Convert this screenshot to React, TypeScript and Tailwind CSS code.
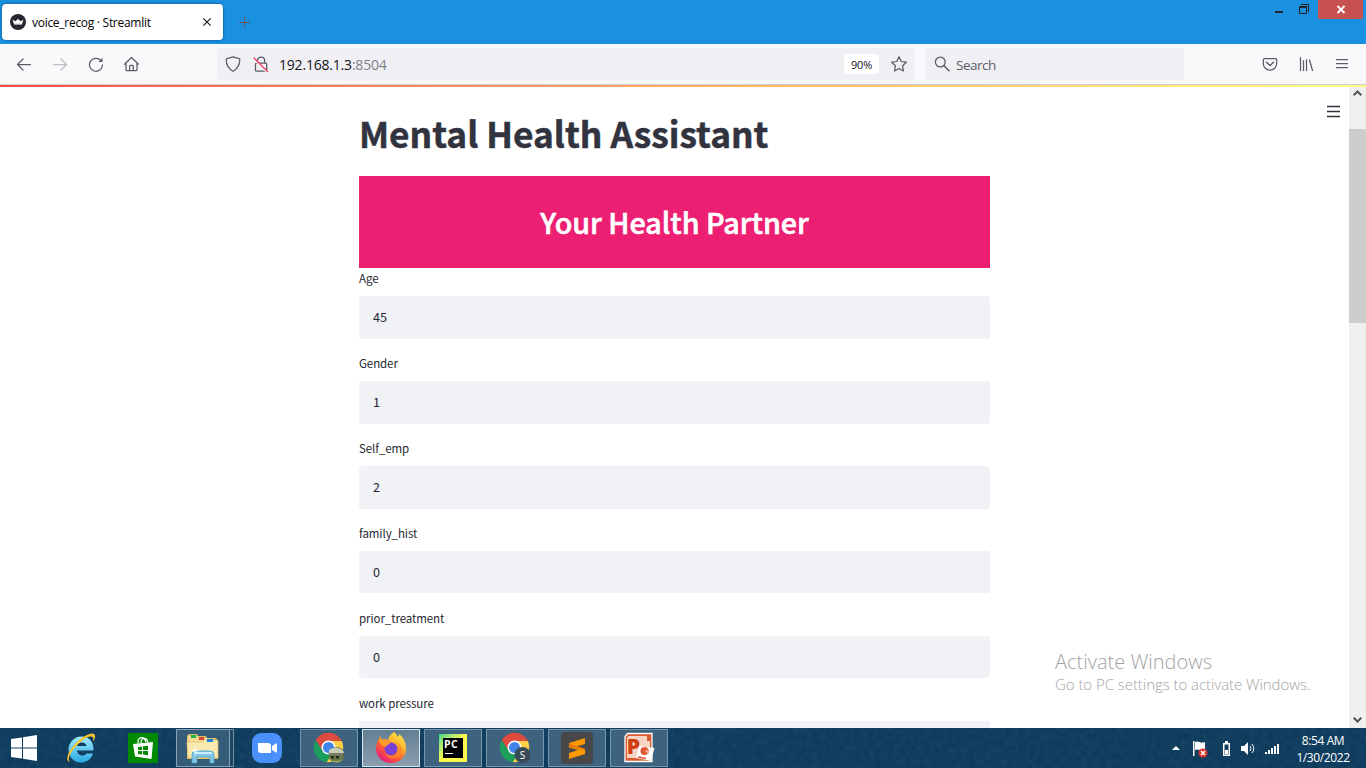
import React from "react";

const fields = [
  { label: "Age", value: "45" },
  { label: "Gender", value: "1" },
  { label: "Self_emp", value: "2" },
  { label: "family_hist", value: "0" },
  { label: "prior_treatment", value: "0" },
  { label: "work pressure", value: "" },
];

function TabBar() {
  return (
    <div className="flex h-11 shrink-0 items-start bg-[#1a91e0]">
      <div className="ml-0.5 mt-1 flex h-9 w-[221px] items-center rounded bg-white pl-2 pr-[10px] shadow-[0_0_3px_rgba(0,0,0,0.45)]">
        <svg width="16" height="16" viewBox="0 0 16 16">
          <circle cx="8" cy="8" r="8" fill="#262730" />
          <path d="M2.6 5.8 5.6 7.3 8 4.7l2.4 2.6 3-1.5-1.5 4.8H4.1z" fill="#fff" />
          <path d="M4.5 10.2h7" stroke="#aaa" />
        </svg>
        <span className="ml-[6px] whitespace-nowrap pt-0.5 text-xs tracking-[-0.28px] text-black">voice_recog · Streamlit</span>
        <svg className="ml-auto" width="12" height="12" viewBox="0 0 12 12">
          <path d="m2.3 2.3 7.4 7.4m0-7.4L2.3 9.700" stroke="#15141a" strokeWidth="1.1" />
        </svg>
      </div>
      <svg className="ml-4 mt-[17px]" width="12" height="12" viewBox="0 0 12 12">
        <path d="M5.500 0v11M0 5.500h11" stroke="#5f5a62" strokeWidth="1" />
      </svg>
      <div className="ml-auto flex items-start">
        <div className="mr-4 mt-[11px] h-0.5 w-2 bg-[#262626]" />
        <svg className="mr-2 mt-1" width="11" height="11" viewBox="0 0 11 11" fill="none" stroke="#222" shapeRendering="crispEdges">
          <path d="M0 2.500h8M.5 2v8M0 9.500h8M7.500 2v8M0 3.500h8" />
          <path d="M2 .5h8M9.500 0v8" />
        </svg>
        <div className="mr-[3px] flex h-[19px] w-[45px] items-center justify-center bg-[#c75050]">
          <svg width="10" height="9" viewBox="0 0 10 9">
            <path d="m1.500 1 7 7m0-7-7 7" stroke="#fff" strokeWidth="1.900" />
          </svg>
        </div>
      </div>
    </div>
  );
}

const line = { fill: "none", stroke: "#5b5b66", strokeWidth: 1.25, strokeLinecap: "round", strokeLinejoin: "round" } as const;

function Toolbar() {
  return (
    <div className="flex h-[41px] shrink-0 items-start border-b border-[#ccccd2] bg-[#f9f9fb]">
      <div className="flex h-full w-[217px] items-center gap-5 pl-4">
        <svg width="16" height="16" viewBox="0 0 16 16" {...line}><path d="M1.500 8.500h13M7 3 1.500 8.500 7 14" /></svg>
        <svg width="16" height="16" viewBox="0 0 16 16" {...line} stroke="#bebec4"><path d="M1.500 8.500h13M9 3 14.500 8.500 9 14" /></svg>
        <svg width="16" height="16" viewBox="0 0 16 16" {...line}>
          <path d="M14.500 9A6.500 6.500 0 1 1 12.700 4.300" /><path d="M14.500 1.800v4.200h-4.200z" fill="#5b5b66" stroke="none" />
        </svg>
        <svg className="-ml-[1px]" width="16" height="16" viewBox="0 0 16 16" {...line}>
          <path d="M1.500 8.200 8.500 1.500l7 6.700M3 7v6.700q0 1 1 1h9q1 0 1-1V7M6.700 14.500v-4.300q0-.8.8-.8h2q.8 0 .8.800v4.300" />
        </svg>
      </div>
      <div className="mt-1 flex h-8 w-[698px] items-center rounded bg-[#f0f0f4] pl-2">
        <svg width="16" height="16" viewBox="0 0 16 16" {...line}>
          <path d="M8 .8 14 2.700q.8.200.8 1.100C14.700 9 12.200 13 8 15.300 3.800 13 1.300 9 1.200 3.800q0-.9.800-1.100z" />
        </svg>
        <svg className="ml-3" width="16" height="16" viewBox="0 0 16 16" {...line}>
          <path d="M4.500 7V4.600a3.600 3.600 0 0 1 7.200 0V7M3.500 7h9.200q1 0 1 1v6.200q0 1-1 1H3.500q-1 0-1-1V8q0-1 1-1z" />
          <path d="m1 3.500 13 13" stroke="#f0f0f4" strokeWidth="1.500" /><path d="m1 2 13.500 13.500" stroke="#f33a62" />
        </svg>
        <span className="ml-[10px] pt-0.5 text-sm tracking-[-0.2px] text-[#15141a]">192.168.1.3<span className="text-[#808087]">:8504</span></span>
        <span className="ml-auto flex h-5 w-[35px] items-center justify-center rounded-[3px] bg-white pt-0.5 text-[11px] tracking-[-0.2px] text-[#15141a]">90%</span>
        <svg className="ml-3 mr-2" width="16" height="16" viewBox="0 0 16 16" {...line}>
          <path d="m8 .8 2.200 4.700 5.100.7-3.700 3.600.9 5.200L8 12.500 3.500 15l.9-5.200L.7 6.200l5.100-.7z" />
        </svg>
      </div>
      <div className="ml-[10px] mt-1 flex h-8 w-[259px] items-center rounded bg-[#f0f0f4] pl-[9px]">
        <svg width="16" height="16" viewBox="0 0 16 16" {...line}><circle cx="6.300" cy="6" r="4.900" /><path d="m10 9.700 5 5" strokeWidth="1.500" /></svg>
        <span className="ml-[6px] pt-0.5 text-[13.500px] tracking-[-0.5px] text-[#5b5b66]">Search</span>
      </div>
      <div className="ml-auto mr-4 flex h-full items-center gap-5">
        <svg width="16" height="16" viewBox="0 0 16 16" {...line}>
          <path d="M2.500 2.500h11q1.200 0 1.200 1.200V7.500a6.700 6.700 0 0 1-13.400 0V3.700q0-1.200 1.200-1.200z" /><path d="M4.500 6.300 8 9.500l3.500-3.200" strokeWidth="1.500" />
        </svg>
        <svg width="16" height="16" viewBox="0 0 16 16" {...line}><path d="M2.500 1.500v13M5.500 4.500v10M8.500 3.500v11M11.500 4l3 10.500" /></svg>
        <svg width="16" height="16" viewBox="0 0 16 16" {...line}><path d="M2.500 3.500h11M2.500 7.500h11M2.500 11.500h11" /></svg>
      </div>
    </div>
  );
}

function ScrollBar() {
  return (
    <div className="flex w-[17px] shrink-0 flex-col items-center bg-[#f0f0f0]">
      <svg className="mt-[3px]" width="9" height="6" viewBox="0 0 9 6" fill="none"><path d="M.7 5.300 4.500 1.500l3.800 3.800" stroke="#555" strokeWidth="2" /></svg>
      <div className="mt-[33px] h-[194px] w-full bg-[#cdcdcd]" />
      <svg className="mb-[5px] mt-auto" width="9" height="6" viewBox="0 0 9 6" fill="none"><path d="M.7.700 4.500 4.500 8.300.700" stroke="#555" strokeWidth="2" /></svg>
    </div>
  );
}

function Field({ label, value }: { label: string; value: string }) {
  return (
    <div className="h-[84.920px] shrink-0">
      <div className="flex h-[28px] items-start text-[11.500px] leading-[20px] tracking-[-0.08px] text-[#262730]">{label}</div>
      <div className="flex h-[42.720px] items-center rounded-[3px] bg-[#f0f2f6] pb-[1px] pl-[14px] text-[12.700px] text-[#262730]">{value}</div>
    </div>
  );
}

function Page() {
  return (
    <div className="flex min-h-0 flex-1">
      <main className="relative flex min-w-0 flex-1 flex-col overflow-hidden bg-white pl-[359px] font-['Noto_Sans_CJK_SC',sans-serif]">
        <div className="flex w-[631px] flex-col">
          <h1 className="flex h-[89px] items-center whitespace-nowrap pt-1 text-[35.300px] font-bold text-[#31333f] [-webkit-text-stroke:0.5px_#31333f]">Mental Health Assistant</h1>
          <div className="flex h-[92px] items-center justify-center bg-[#ed1f73] text-[28.700px] font-medium text-white [-webkit-text-stroke:0.6px_white]">
            <h2>Your Health Partner</h2>
          </div>
          {fields.map((f) => <Field key={f.label} {...f} />)}
        </div>
        <svg className="absolute right-[9px] top-[18px]" width="13" height="13" viewBox="0 0 13 13"><path d="M0 1.500h13M0 6.500h13M0 11.500h13" stroke="#31333f" strokeWidth="1.700" /></svg>
        <div className="absolute left-[1055px] top-[563px] whitespace-nowrap font-['Open_Sans',sans-serif] text-[#a4a4a4]">
          <div className="text-[20px] font-light leading-6">Activate Windows</div>
          <div className="text-[15px] font-light leading-[21px] tracking-[-0.05px]">Go to PC settings to activate Windows.</div>
        </div>
      </main>
      <ScrollBar />
    </div>
  );
}

function Chrome({ id, children }: { id: string; children?: React.ReactNode }) {
  return (
    <svg width="32" height="32" viewBox="0 0 32 32">
      <defs><clipPath id={id}><circle cx="15.500" cy="15.500" r="14.700" /></clipPath></defs>
      <g clipPath={`url(#${id})`}>
        <path d="M0 0h32v10H15.500L9.500 19 1 5z" fill="#dd4b3e" />
        <path d="M1.500 7 10 19l10 0-7 13H0V6z" fill="#1a9f5c" />
        <path d="M15.500 9H32v23H12.500l8.500-13z" fill="#ffcf45" />
      </g>
      <circle cx="15.500" cy="15.500" r="7" fill="#fff" /><circle cx="15.500" cy="15.500" r="5.500" fill="#4285e8" />
      {children}
    </svg>
  );
}

function TaskButton({ children, kind = "open" }: { children: React.ReactNode; kind?: "plain" | "open" | "active" }) {
  const styles = {
    plain: "border-transparent",
    open: "border-[#7896a9] bg-[#3d637f]",
    active: "border-[#dce5ea] bg-gradient-to-b from-[#637f94] to-[#8b9eac]",
  };
  return <div className={`flex h-[38px] w-[58px] items-center justify-center border ${styles[kind]}`}>{children}</div>;
}

function ExplorerIcon() {
  return (
    <svg width="34" height="32" viewBox="0 0 34 32">
      <path d="M1 5q0-3 3-3h7l1 2h8l1 2h9l2 3v18H1z" fill="#dfbd65" />
      <path d="M2 4h9l2 2h8l2 2h8v6H2z" fill="#f6dc94" />
      <path d="M1 10h15l3-2h12q1 0 1 2v16H2z" fill="#fae9b0" stroke="#e2be65" strokeWidth=".7" />
      <path d="M5 4.500h5" stroke="#19b454" strokeWidth="3" /><path d="M13 6.500h5" stroke="#d94635" strokeWidth="3" /><path d="M21 8.500h6" stroke="#2185d5" strokeWidth="3" />
      <path d="M6 31v-8q0-4 4-4h14q4 0 4 4v8h-4v-6H11v6z" fill="#82c7e8" stroke="#4aa1cc" strokeWidth=".8" />
      <path d="M9 21h17" stroke="#ccefff" strokeWidth="2" /><path d="m9 13 .8 5 4 .8-4 .8-.8 5-.8-5-4-.8 4-.8z" fill="#fff" opacity=".9" />
    </svg>
  );
}

function TaskBar() {
  return (
    <div className="relative flex h-10 shrink-0 items-center bg-[#0e3b5c] text-white">
      <svg className="absolute inset-0 opacity-10" width="1366" height="40">
        <filter id="leather"><feTurbulence type="fractalNoise" baseFrequency=".16" numOctaves="3" /><feColorMatrix values="0 0 0 0 .3  0 0 0 0 .6  0 0 0 0 .8  1 0 0 0 -.25" /></filter>
        <rect width="1366" height="40" filter="url(#leather)" />
      </svg>
      <div className="relative flex w-full items-center">
        <div className="w-[52px] pl-[11px]">
          <svg width="26" height="26" viewBox="0 0 26 26" fill="#fff"><path d="M0 4 11 2.400v10H0zM12 2.200 26 0v12.400H12zM0 13.400h11v10.200L0 22zM12 13.400h14V26l-14-2.200z" /></svg>
        </div>
        <div className="flex gap-1">
          <TaskButton kind="plain">
            <svg width="32" height="32" viewBox="0 0 32 32">
              <defs><linearGradient id="ie" x2="0" y2="1"><stop stopColor="#a2eaff" /><stop offset="1" stopColor="#2aa8e4" /></linearGradient></defs>
              <path d="M28.500 18.500H12c.3 5.500 7.500 6.500 9.500 3h6.500C26 28 21 30.500 16 30.500 8 30.500 3.500 24 3.500 17.500S9 4.500 16.500 4.500C24.500 4.500 29 10.500 28.500 18.500zM12 14h9.500c-.5-4.500-8.500-5-9.500 0z" fill="url(#ie)" />
              <path d="M5 30C-1 29 4 18 11 11 18 4 27-.5 29.500 2.500c1.500 2 0 5-1.500 7 1-4 0-5.500-3-5C18 5.500 5 19 4 26c-.3 2 0 3 1 4z" fill="#f7c42d" />
            </svg>
          </TaskButton>
          <TaskButton kind="plain">
            <div className="flex h-[30px] w-[30px] items-center justify-center bg-[#008a00]">
              <svg width="24" height="26" viewBox="0 0 24 26"><path d="m2 9 20-2-1.500 17L4 21.500z" fill="#fff" /><path d="M7 8.500c-.5-7 6-8 8-1.500M10 8c0-6 6-6 7-.5" fill="none" stroke="#fff" strokeWidth="1.300" /><path d="m7 12 4-.5v3.500H7zm5-.7 5-.5V15h-5zM7 16h4v3.500l-4-.5zm5 0h5v4.200l-5-.6z" fill="#008a00" /></svg>
            </div>
          </TaskButton>
          <div className="flex h-[38px] w-[58px]">
            <div className="flex w-[54px] items-center justify-center border border-[#8ba3b1] bg-[#355d79]"><ExplorerIcon /></div>
            <div className="w-1 border border-l-0 border-[#718e9f] bg-[#1b4766]" />
          </div>
          <TaskButton kind="plain">
            <svg width="30" height="30" viewBox="0 0 30 30"><rect width="30" height="30" rx="9" fill="#4a90fa" /><path d="M6 10h10q3 0 3 3v7H9q-3 0-3-3zM20 13l5-3v10l-5-3z" fill="#fff" /></svg>
          </TaskButton>
          <TaskButton>
            <Chrome id="chrome-a"><g><circle cx="23.500" cy="23" r="8" fill="#65764a" /><path d="M16 18q8-6 15 2l-1 3H16z" fill="#c9ceb6" /><path d="M16 21.500h15v1H16zM18 24h3v2.500h-3zm5 0h3v2.500h-3z" fill="#282b1c" /><path d="M17 27q6 4 13 0-6 7-13 0z" fill="#a4ad6b" /></g></Chrome>
          </TaskButton>
          <TaskButton kind="active">
            <svg width="32" height="32" viewBox="0 0 32 32">
              <defs><linearGradient id="fx" x1=".9" y1="0" x2=".2" y2="1"><stop stopColor="#fff44f" /><stop offset=".35" stopColor="#ffb52e" /><stop offset=".65" stopColor="#ff5634" /><stop offset="1" stopColor="#e31587" /></linearGradient></defs>
              <path d="M19 0c2 2 3 3 4 5 1-1 1-2 1-3 5 4 7 9 7 15 0 8-7 14-15 14S1 25 1 17c0-4 1-7 3-10l1-3 2 4c2-1 4-1 6 0 1-4 3-6 6-8z" fill="url(#fx)" />
              <circle cx="16" cy="17" r="6.500" fill="#7941d8" /><path d="M4 7l1-2 2 3c2-1 4-1 6 0l-1 2 3 1c-1 2-4 2-4 4-4-1-7-3-7-8z" fill="#ff9b28" />
              <path d="M20 10c4 2 5 7 2 11-4 4-10 3-12-1 1 8 14 10 17 1 1-6-2-10-7-11z" fill="#ff8a2b" opacity=".7" />
            </svg>
          </TaskButton>
          <TaskButton>
            <div className="flex h-7 w-7 items-center justify-center bg-gradient-to-br from-[#21d789] via-[#fcf84a] to-[#fcf84a]"><div className="h-5 w-5 bg-black pl-[1px] pt-[1px] text-[10.500px] font-bold leading-[10px] tracking-[0.500px]">PC<div className="ml-[1px] mt-[4px] h-[1px] w-2 bg-white" /></div></div>
          </TaskButton>
          <TaskButton>
            <Chrome id="chrome-b"><circle cx="23.500" cy="23" r="8" fill="#394b56" /><text x="23.500" y="26.500" textAnchor="middle" fontSize="10" fill="#fff">S</text></Chrome>
          </TaskButton>
          <TaskButton>
            <div className="flex h-8 w-8 items-center justify-center rounded-sm bg-[#484848]"><svg width="18" height="22" viewBox="0 0 18 22"><path d="m1 6 16-5v6L8 9.500l9 2.500v5L1 22v-6l9-3-9-2.500z" fill="#ff9800" /><path d="m1 6 16 6v1L1 10.500z" fill="#e77d05" /></svg></div>
          </TaskButton>
          <TaskButton>
            <div className="relative flex h-8 w-8 items-center justify-center">
              <svg className="absolute inset-0" width="32" height="32" viewBox="0 0 32 32">
                <path d="M4.500 1.500H29v28H2V4.500z" fill="#dc5b35" stroke="#fff" strokeWidth="1.300" />
                <path d="M5.500 4H24v5h3v17H4V6z" fill="#f8d5c3" />
              </svg>
              <span className="relative mb-1 mr-[11px] text-[21px] font-extrabold leading-7 text-[#cf3e13]">P</span>
              <svg className="absolute inset-0" width="32" height="32" viewBox="0 0 32 32">
                <path d="m16 14 15.500 2-3.500 13-15-3z" fill="#fff" /><circle cx="21.500" cy="19" r="4" fill="#df5733" /><path d="m21.500 19 5-2-1 5z" fill="#f3aa90" /><path d="m15 25 8 1.500" stroke="#df5733" strokeWidth="1.500" />
              </svg>
            </div>
          </TaskButton>
        </div>
        <div className="ml-auto flex items-center">
          <svg width="109" height="20" viewBox="0 0 109 20" fill="#fff">
            <path d="M1 12h8L5 8z" />
            <path d="M22 3h1.500v15H22zM24 4c4-2 5 2 10 0v8c-5 2-6-2-10 0z" />
            <circle cx="32" cy="15" r="4.500" fill="#d8352c" /><path d="m30 13 4 4m0-4-4 4" stroke="#fff" strokeWidth="1.500" />
            <path d="M54 3h3v2h2v13h-7V5h2zM53.500 6.500v10h4v-10z" fillRule="evenodd" /><path d="M54 12h3v4h-3z" />
            <path d="M70 8h3l4-4v13l-4-4h-3z" /><path d="M79 8q2 2.500 0 5M81 6q3.500 4.500 0 9" fill="none" stroke="#fff" strokeWidth="1" />
            <path d="M94 14h2v2h-2zm3-2h2v4h-2zm3-2h2v6h-2zm3-2h2v8h-2zm3-2h2v10h-2z" />
          </svg>
          <div className="ml-[7px] mr-[7px] w-[72px] whitespace-nowrap pt-0.5 text-center text-xs leading-[17px] tracking-[-0.4px]"><div>8:54 AM</div><div>1/30/2022</div></div>
        </div>
      </div>
    </div>
  );
}

export default function App() {
  return (
    <div className="flex h-screen w-full flex-col overflow-hidden bg-white font-['Open_Sans',sans-serif]">
      <TabBar />
      <Toolbar />
      <div className="h-0.5 shrink-0 bg-gradient-to-r from-[#ff4b4b] to-[#fffd80]" />
      <Page />
      <TaskBar />
    </div>
  );
}
